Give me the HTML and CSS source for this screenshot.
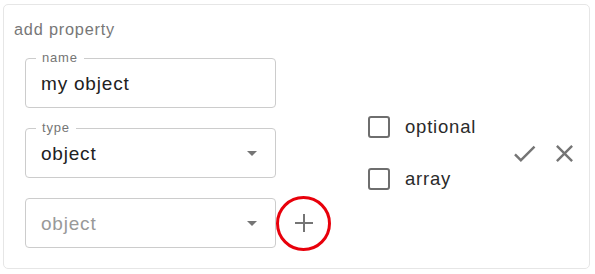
FILE: index.html
```html
<!DOCTYPE html>
<html lang="en">
<head>
<meta charset="utf-8">
<title>add property</title>
<link rel="stylesheet" href="styles.css">
</head>
<body>
<div class="card">
  <div class="title">add property</div>
  <div class="row">
    <div class="fields">
      <div class="field">
        <span class="label">name</span>
        <span class="value">my object</span>
      </div>
      <div class="field">
        <span class="label">type</span>
        <span class="value">object</span>
        <span class="arrow"></span>
      </div>
      <div class="field-row">
        <div class="field">
          <span class="value placeholder">object</span>
          <span class="arrow"></span>
        </div>
        <button class="add-btn" type="button" aria-label="add">
          <svg width="20" height="20" viewBox="0 0 20 20"><path d="M10 1v18M1 10h18" stroke="#757575" stroke-width="2" fill="none"/></svg>
        </button>
      </div>
    </div>
    <div class="checks">
      <label class="check"><span class="box"></span><span class="check-text">optional</span></label>
      <label class="check"><span class="box"></span><span class="check-text">array</span></label>
    </div>
    <div class="actions">
      <svg class="icon" viewBox="0 0 24 24"><path d="M9 16.17L4.83 12l-1.42 1.41L9 19 21 7l-1.41-1.41z"/></svg>
      <svg class="icon" viewBox="0 0 24 24"><path d="M19 6.41L17.59 5 12 10.59 6.41 5 5 6.41 10.59 12 5 17.59 6.41 19 12 13.41 17.59 19 19 17.59 13.41 12z"/></svg>
    </div>
  </div>
</div>
</body>
</html>
```

FILE: styles.css
```css
* { box-sizing: border-box; }

html, body {
  margin: 0;
  background: #ffffff;
}

body {
  font-family: "Liberation Sans", Arial, sans-serif;
  letter-spacing: 0.05em;
  color: #212121;
}

.card {
  margin: 4px 0 0 3px;
  width: 587px;
  height: 265px;
  border: 1px solid #e6e6e6;
  border-radius: 5px;
  padding: 14px 10px 0 10px;
}

.title {
  font-size: 16.3px;
  line-height: 20px;
  color: #777777;
}

.row {
  display: flex;
  align-items: center;
  margin-top: 19px;
  margin-left: 11px;
}

.fields {
  display: flex;
  flex-direction: column;
  gap: 20px;
}

.field-row {
  display: flex;
  align-items: center;
  height: 50px;
}

.field {
  position: relative;
  display: flex;
  align-items: center;
  width: 251px;
  height: 50px;
  border: 1px solid #cccccc;
  border-radius: 4px;
  padding: 0 18px 0 15px;
}

.label {
  position: absolute;
  left: 10px;
  top: -8px;
  padding: 0 6px;
  background: #ffffff;
  font-size: 13px;
  line-height: 14px;
  color: #757575;
}

.value {
  font-size: 19px;
  line-height: 1;
  color: #212121;
}

.value.placeholder {
  color: #999999;
}

.arrow {
  margin-left: auto;
  width: 0;
  height: 0;
  border-left: 5px solid transparent;
  border-right: 5px solid transparent;
  border-top: 5px solid #757575;
}

.add-btn {
  display: flex;
  align-items: center;
  justify-content: center;
  width: 55px;
  height: 55px;
  margin: -2.5px 0;
  padding: 0;
  border: 3px solid #e8000b;
  border-radius: 50%;
  background: transparent;
}

.checks {
  display: flex;
  flex-direction: column;
  gap: 30px;
  margin-left: 37px;
}

.check {
  display: flex;
  align-items: center;
  gap: 15px;
  height: 22px;
}

.box {
  width: 22px;
  height: 22px;
  border: 2.5px solid #6e6e6e;
  border-radius: 3px;
}

.check-text {
  font-size: 18.5px;
  line-height: 1;
  color: #2a2a2a;
}

.actions {
  display: flex;
  align-items: center;
  gap: 11px;
  margin-left: auto;
}

.icon {
  width: 29px;
  height: 29px;
  fill: #757575;
}
```
